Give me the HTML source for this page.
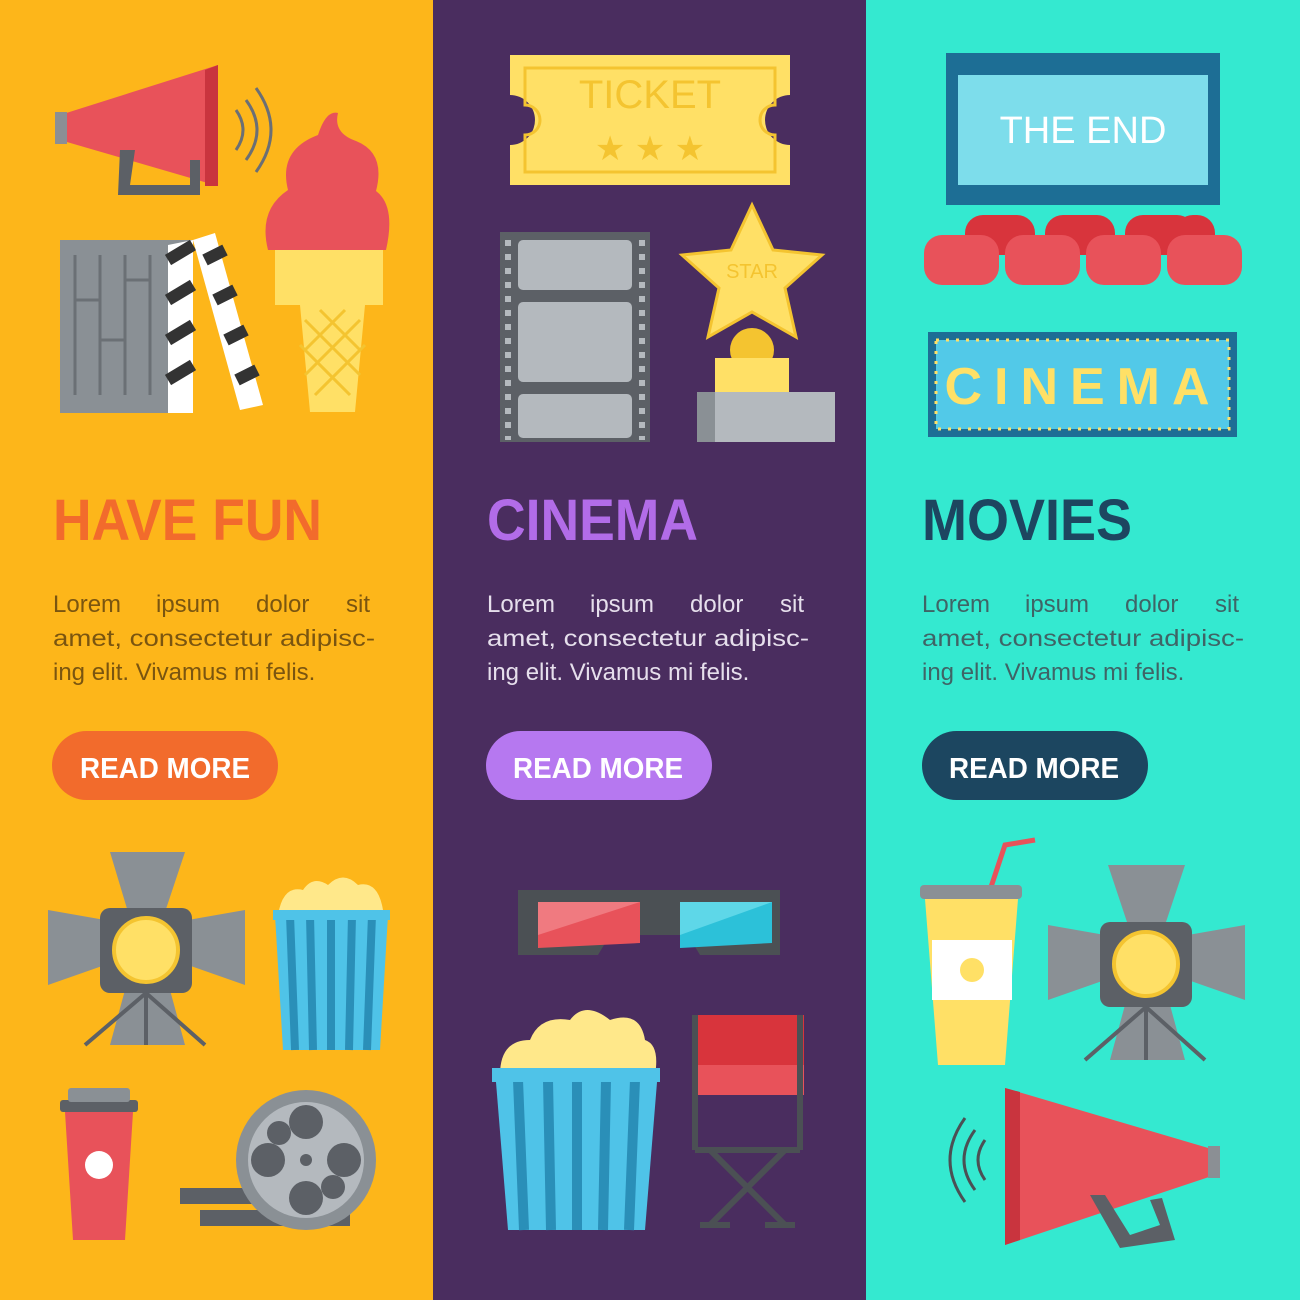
<!DOCTYPE html><html><head><style>
body{margin:0;width:1300px;height:1300px;overflow:hidden;font-family:"Liberation Sans",sans-serif}
svg{display:block}
.h{font-weight:bold;font-size:58px}
.b{font-size:24px}
.b2{font-size:23px}
.btn{font-weight:bold;font-size:29px;fill:#fff}
</style></head><body>
<svg width="1300" height="1300" viewBox="0 0 1300 1300">
<rect x="0" y="0" width="433" height="1300" fill="#FDB61A"/>
<rect x="433" y="0" width="433" height="1300" fill="#4A2D5F"/>
<rect x="866" y="0" width="434" height="1300" fill="#34E9D0"/>

<polygon points="60,115 218,65 218,186 60,140" fill="#E8525A"/>
<polygon points="218,65 218,186 205,186 205,70" fill="#C9343E"/>
<rect x="55" y="112" width="12" height="32" fill="#8B8F94"/>
<polygon points="120,150 135,150 130,185 190,185 190,160 200,160 200,195 118,195" fill="#5C6066"/>
<path d="M236 110 q14 20 0 40 M246 100 q22 30 0 60 M256 88 q30 42 0 84" stroke="#6B6F75" stroke-width="3" fill="none"/>
<path d="M268 250 q-10 -40 20 -60 q-10 -40 30 -55 q8 -25 20 -22 q-5 20 18 28 q30 12 20 50 q20 15 10 59z" fill="#E8525A"/>
<rect x="275" y="250" width="108" height="55" fill="#FFE066"/>
<polygon points="300,305 365,305 355,412 310,412" fill="#FFE066"/>
<path d="M305 320 l55 55 M300 345 l50 50 M320 310 l40 40 M360 320 l-55 55 M365 345 l-50 50 M345 310 l-40 40" stroke="#F4C430" stroke-width="3"/>
<rect x="60" y="240" width="133" height="173" fill="#8A9095"/>
<path d="M75 255v140M100 255v140M125 255v140M150 255v140M75 300h25M100 340h25M125 280h25" stroke="#6B7075" stroke-width="3"/>
<polygon points="168,245 193,240 193,413 168,413" fill="#fff"/>
<path d="M168 260 l25 -15 M168 300 l25 -15 M168 340 l25 -15 M168 380 l25 -15" stroke="#333" stroke-width="12"/>
<polygon points="193,240 215,233 263,405 240,410" fill="#fff"/>
<path d="M205 260 l20 -10 M215 300 l20 -10 M226 340 l20 -10 M237 380 l20 -10" stroke="#333" stroke-width="12"/>

<text x="53" y="540" class="h" fill="#F26B2C" textLength="269" lengthAdjust="spacingAndGlyphs">HAVE FUN</text>
<g class="b" fill="#7A5510">
<text y="612"><tspan x="53">Lorem</tspan><tspan x="156">ipsum</tspan><tspan x="256">dolor</tspan><tspan x="346">sit</tspan></text>
<text x="53" y="646" class="b2" textLength="322" lengthAdjust="spacingAndGlyphs">amet, consectetur adipisc-</text>
<text x="53" y="680">ing elit. Vivamus mi felis.</text>
</g>
<rect x="52" y="731" width="226" height="69" rx="34.5" fill="#F26B2C"/>
<text x="80" y="778" class="btn" textLength="170" lengthAdjust="spacingAndGlyphs">READ MORE</text>

<polygon points="110,852 185,852 165,912 128,912" fill="#8A9095"/>
<polygon points="48,910 105,920 105,965 48,985" fill="#8A9095"/>
<polygon points="245,910 188,920 188,965 245,985" fill="#8A9095"/>
<polygon points="125,990 170,990 185,1045 110,1045" fill="#8A9095"/>
<rect x="100" y="908" width="92" height="85" rx="10" fill="#5C6066"/>
<circle cx="146" cy="950" r="32" fill="#FFE066" stroke="#F4C430" stroke-width="4"/>
<path d="M146 993 L85 1045 M146 993 L205 1045 M146 993 V1045" stroke="#5C6066" stroke-width="4"/>
<path d="M278 915 q5 -30 25 -25 q10 -15 25 -5 q15 -15 30 0 q20 -5 25 25z" fill="#FFE88A"/>
<polygon points="275,915 388,915 380,1050 283,1050" fill="#4FC3E8"/>
<path d="M290 915 l5 135 M310 915 l3 135 M331 915v135 M352 915 l-3 135 M372 915 l-5 135" stroke="#2A8FB8" stroke-width="8"/>
<rect x="273" y="910" width="117" height="10" fill="#4FC3E8"/>
<rect x="60" y="1100" width="78" height="12" rx="3" fill="#5C6066"/>
<rect x="68" y="1088" width="62" height="14" rx="3" fill="#8A9095"/>
<polygon points="65,1112 133,1112 125,1240 73,1240" fill="#E8525A"/>
<circle cx="99" cy="1165" r="14" fill="#fff"/>
<rect x="180" y="1188" width="80" height="16" fill="#5C6066"/>
<rect x="200" y="1210" width="150" height="16" fill="#5C6066"/>
<circle cx="306" cy="1160" r="70" fill="#8A9095"/>
<circle cx="306" cy="1160" r="58" fill="#B4B9BE"/>
<g fill="#5C6066"><circle cx="306" cy="1122" r="17"/><circle cx="306" cy="1198" r="17"/><circle cx="268" cy="1160" r="17"/><circle cx="344" cy="1160" r="17"/><circle cx="279" cy="1133" r="12"/><circle cx="333" cy="1187" r="12"/><circle cx="306" cy="1160" r="6"/></g>

<path d="M510 55 H790 V95 a25 25 0 0 0 0 50 V185 H510 V145 a25 25 0 0 0 0 -50z" fill="#FFE066"/>
<path d="M525 68 H775 V105 a15 15 0 0 0 0 30 V172 H525 V135 a15 15 0 0 0 0 -30z" fill="none" stroke="#F4C430" stroke-width="3"/>
<text x="650" y="108" text-anchor="middle" font-size="40" fill="#F4C430">TICKET</text>
<text x="650" y="160" text-anchor="middle" font-size="34" fill="#F4C430">★ ★ ★</text>
<rect x="500" y="232" width="150" height="210" fill="#5C6066"/>
<rect x="518" y="240" width="114" height="50" rx="5" fill="#B4B9BE"/>
<rect x="518" y="302" width="114" height="80" rx="5" fill="#B4B9BE"/>
<rect x="518" y="394" width="114" height="44" rx="5" fill="#B4B9BE"/>
<path d="M508 240 V440 M642 240 V440" stroke="#B4B9BE" stroke-width="6" stroke-dasharray="6 8"/>
<polygon points="752,205 773,250 822,255 785,288 796,337 752,312 708,337 719,288 682,255 731,250" fill="#FFE066" stroke="#F4C430" stroke-width="3"/>
<text x="752" y="278" text-anchor="middle" font-size="20" fill="#F4C430">STAR</text>
<circle cx="752" cy="350" r="22" fill="#F4C430"/>
<rect x="715" y="358" width="74" height="35" fill="#FFE066"/>
<rect x="697" y="392" width="138" height="50" fill="#B4B9BE"/>
<rect x="697" y="392" width="18" height="50" fill="#8A9095"/>

<text x="487" y="540" class="h" fill="#B26CE8" textLength="211" lengthAdjust="spacingAndGlyphs">CINEMA</text>
<g class="b" fill="#E6DFEC">
<text y="612"><tspan x="487">Lorem</tspan><tspan x="590">ipsum</tspan><tspan x="690">dolor</tspan><tspan x="780">sit</tspan></text>
<text x="487" y="646" class="b2" textLength="322" lengthAdjust="spacingAndGlyphs">amet, consectetur adipisc-</text>
<text x="487" y="680">ing elit. Vivamus mi felis.</text>
</g>
<rect x="486" y="731" width="226" height="69" rx="34.5" fill="#B678F0"/>
<text x="513" y="778" class="btn" textLength="170" lengthAdjust="spacingAndGlyphs">READ MORE</text>

<path d="M518 890 H780 V955 H700 L688 935 H610 L598 955 H518z" fill="#4B5054"/>
<polygon points="538,902 640,902 640,943 538,948" fill="#E8525A"/>
<polygon points="538,902 640,902 538,935" fill="#F07A80"/>
<polygon points="680,902 772,902 772,943 680,948" fill="#2CC1D9"/>
<polygon points="680,902 772,902 680,935" fill="#5ED7E8"/>
<path d="M500 1075 q0 -35 30 -35 q10 -25 40 -20 q15 -20 40 0 q30 -10 35 20 q15 5 10 35z" fill="#FFE88A"/>
<polygon points="495,1070 658,1070 645,1230 508,1230" fill="#4FC3E8"/>
<path d="M518 1080 l6 150 M548 1080 l3 150 M577 1080v150 M606 1080 l-3 150 M635 1080 l-6 150" stroke="#2A8FB8" stroke-width="10"/>
<rect x="492" y="1068" width="168" height="14" fill="#4FC3E8"/>
<rect x="692" y="1015" width="112" height="50" fill="#D8343C"/>
<rect x="692" y="1065" width="112" height="30" fill="#E8525A"/>
<path d="M695 1015 V1150 M800 1015 V1150 M695 1150 H800 M710 1225 L785 1150 M785 1225 L710 1150 M700 1225 H730 M765 1225 H795" stroke="#4B5054" stroke-width="6" fill="none"/>

<rect x="946" y="53" width="274" height="152" fill="#1D6E95"/>
<rect x="958" y="75" width="250" height="110" fill="#7DDDEB"/>
<text x="1083" y="143" text-anchor="middle" font-size="38" fill="#fff">THE END</text>
<g fill="#D8343C">
<rect x="965" y="215" width="70" height="40" rx="18"/><rect x="1045" y="215" width="70" height="40" rx="18"/><rect x="1125" y="215" width="70" height="40" rx="18"/><rect x="1175" y="215" width="40" height="40" rx="18"/>
</g>
<g fill="#E8525A">
<rect x="924" y="235" width="75" height="50" rx="18"/><rect x="1005" y="235" width="75" height="50" rx="18"/><rect x="1086" y="235" width="75" height="50" rx="18"/><rect x="1167" y="235" width="75" height="50" rx="18"/>
</g>
<rect x="928" y="332" width="309" height="105" fill="#1D6E95"/>
<rect x="936" y="340" width="293" height="89" fill="#52C9E8" stroke="#FFE066" stroke-width="3" stroke-dasharray="3 7"/>
<text x="1083" y="404" text-anchor="middle" font-size="52" font-weight="bold" fill="#FFE066" letter-spacing="12">CINEMA</text>

<text x="922" y="540" class="h" fill="#1D4660" textLength="210" lengthAdjust="spacingAndGlyphs">MOVIES</text>
<g class="b" fill="#3F6466">
<text y="612"><tspan x="922">Lorem</tspan><tspan x="1025">ipsum</tspan><tspan x="1125">dolor</tspan><tspan x="1215">sit</tspan></text>
<text x="922" y="646" class="b2" textLength="322" lengthAdjust="spacingAndGlyphs">amet, consectetur adipisc-</text>
<text x="922" y="680">ing elit. Vivamus mi felis.</text>
</g>
<rect x="922" y="731" width="226" height="69" rx="34.5" fill="#1C4660"/>
<text x="949" y="778" class="btn" textLength="170" lengthAdjust="spacingAndGlyphs">READ MORE</text>

<path d="M990 890 L1005 845 L1035 840" stroke="#E8525A" stroke-width="5" fill="none"/>
<rect x="920" y="885" width="102" height="14" rx="4" fill="#8A9095"/>
<polygon points="925,899 1018,899 1005,1065 938,1065" fill="#FFE066"/>
<rect x="932" y="940" width="80" height="60" fill="#fff"/>
<circle cx="972" cy="970" r="12" fill="#FFE066"/>
<polygon points="1108,865 1185,865 1165,925 1128,925" fill="#8A9095"/>
<polygon points="1048,925 1105,935 1105,980 1048,1000" fill="#8A9095"/>
<polygon points="1245,925 1188,935 1188,980 1245,1000" fill="#8A9095"/>
<polygon points="1125,1005 1170,1005 1185,1060 1110,1060" fill="#8A9095"/>
<rect x="1100" y="922" width="92" height="85" rx="10" fill="#5C6066"/>
<circle cx="1146" cy="964" r="32" fill="#FFE066" stroke="#F4C430" stroke-width="4"/>
<path d="M1146 1007 L1085 1060 M1146 1007 L1205 1060 M1146 1007 V1060" stroke="#5C6066" stroke-width="4"/>
<polygon points="1005,1088 1215,1150 1215,1175 1005,1245" fill="#E8525A"/>
<polygon points="1005,1088 1020,1092 1020,1240 1005,1245" fill="#C9343E"/>
<rect x="1208" y="1146" width="12" height="32" fill="#8B8F94"/>
<polygon points="1090,1195 1105,1195 1130,1235 1160,1225 1150,1200 1162,1198 1175,1240 1120,1248" fill="#5C6066"/>
<path d="M985 1140 q-14 20 0 40 M975 1130 q-22 30 0 60 M965 1118 q-30 42 0 84" stroke="#4B5054" stroke-width="3" fill="none"/>
</svg>
</body></html>
